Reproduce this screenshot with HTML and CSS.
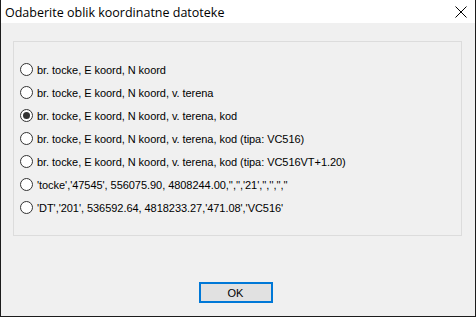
FILE: index.html
```html
<!DOCTYPE html>
<html lang="hr">
<head>
  <meta charset="UTF-8" />
  <title>Odaberite oblik koordinatne datoteke</title>
  <link rel="stylesheet" href="styles.css">
</head>
<body>
  <div class="window">
    <div class="titlebar">
      <span class="title">Odaberite oblik koordinatne datoteke</span>
      <svg class="close" width="12" height="12" viewBox="0 0 12 12">
        <path d="M0.5 0.5 L11.5 11.5 M11.5 0.5 L0.5 11.5" stroke="#000" stroke-width="1" fill="none"/>
      </svg>
    </div>
    <div class="client">
      <div class="group">
        <label class="option"><span class="radio"></span>br. tocke, E koord, N koord</label>
        <label class="option"><span class="radio"></span>br. tocke, E koord, N koord, v. terena</label>
        <label class="option"><span class="radio checked"></span>br. tocke, E koord, N koord, v. terena, kod</label>
        <label class="option"><span class="radio"></span>br. tocke, E koord, N koord, v. terena, kod (tipa: VC516)</label>
        <label class="option"><span class="radio"></span>br. tocke, E koord, N koord, v. terena, kod (tipa: VC516VT+1.20)</label>
        <label class="option"><span class="radio"></span>'tocke','47545', 556075.90, 4808244.00,'','','21','','','',''</label>
        <label class="option"><span class="radio"></span>'DT','201', 536592.64, 4818233.27,'471.08','VC516'</label>
      </div>
      <div class="buttons">
        <button class="ok">OK</button>
      </div>
    </div>
  </div>
</body>
</html>
```

FILE: styles.css
```css
* {
  margin: 0;
  padding: 0;
  box-sizing: border-box;
}

body {
  width: 476px;
  height: 317px;
  overflow: hidden;
  background: #f0f0f0;
}

.window {
  width: 476px;
  height: 317px;
  display: flex;
  flex-direction: column;
  border: 1px solid #1c1c1c;
  border-top: none;
  background: #f0f0f0;
}

.titlebar {
  height: 23px;
  background: #fff;
  display: flex;
  align-items: center;
  justify-content: space-between;
  padding: 1px 8px 0 4px;
}

.title {
  font-family: "Open Sans", "Noto Sans", sans-serif;
  font-size: 12.5px;
  color: #000;
}

.client {
  flex: 1;
  display: flex;
  flex-direction: column;
  padding: 18px 13px 0 12px;
}

.group {
  height: 195px;
  border: 1px solid #dcdcdc;
  padding: 21px 0 0 6px;
  display: flex;
  flex-direction: column;
  gap: 10px;
}

.option {
  display: flex;
  align-items: center;
  height: 13px;
  font-family: "Liberation Sans", Arial, sans-serif;
  font-size: 11px;
  color: #000;
  white-space: nowrap;
  letter-spacing: -0.05px;
}

.radio {
  width: 13px;
  height: 13px;
  border: 1px solid #333;
  border-radius: 50%;
  background: #fff;
  margin-right: 4px;
  flex: none;
  display: flex;
  align-items: center;
  justify-content: center;
}

.radio.checked::after {
  content: "";
  width: 7px;
  height: 7px;
  border-radius: 50%;
  background: #333;
}

.buttons {
  display: flex;
  justify-content: center;
  padding-top: 46px;
  padding-right: 4px;
}

.ok {
  width: 74px;
  height: 21px;
  border: 2px solid #0078d7;
  background: #e1e1e1;
  font-family: "Liberation Sans", Arial, sans-serif;
  font-size: 11px;
  color: #000;
}
```
